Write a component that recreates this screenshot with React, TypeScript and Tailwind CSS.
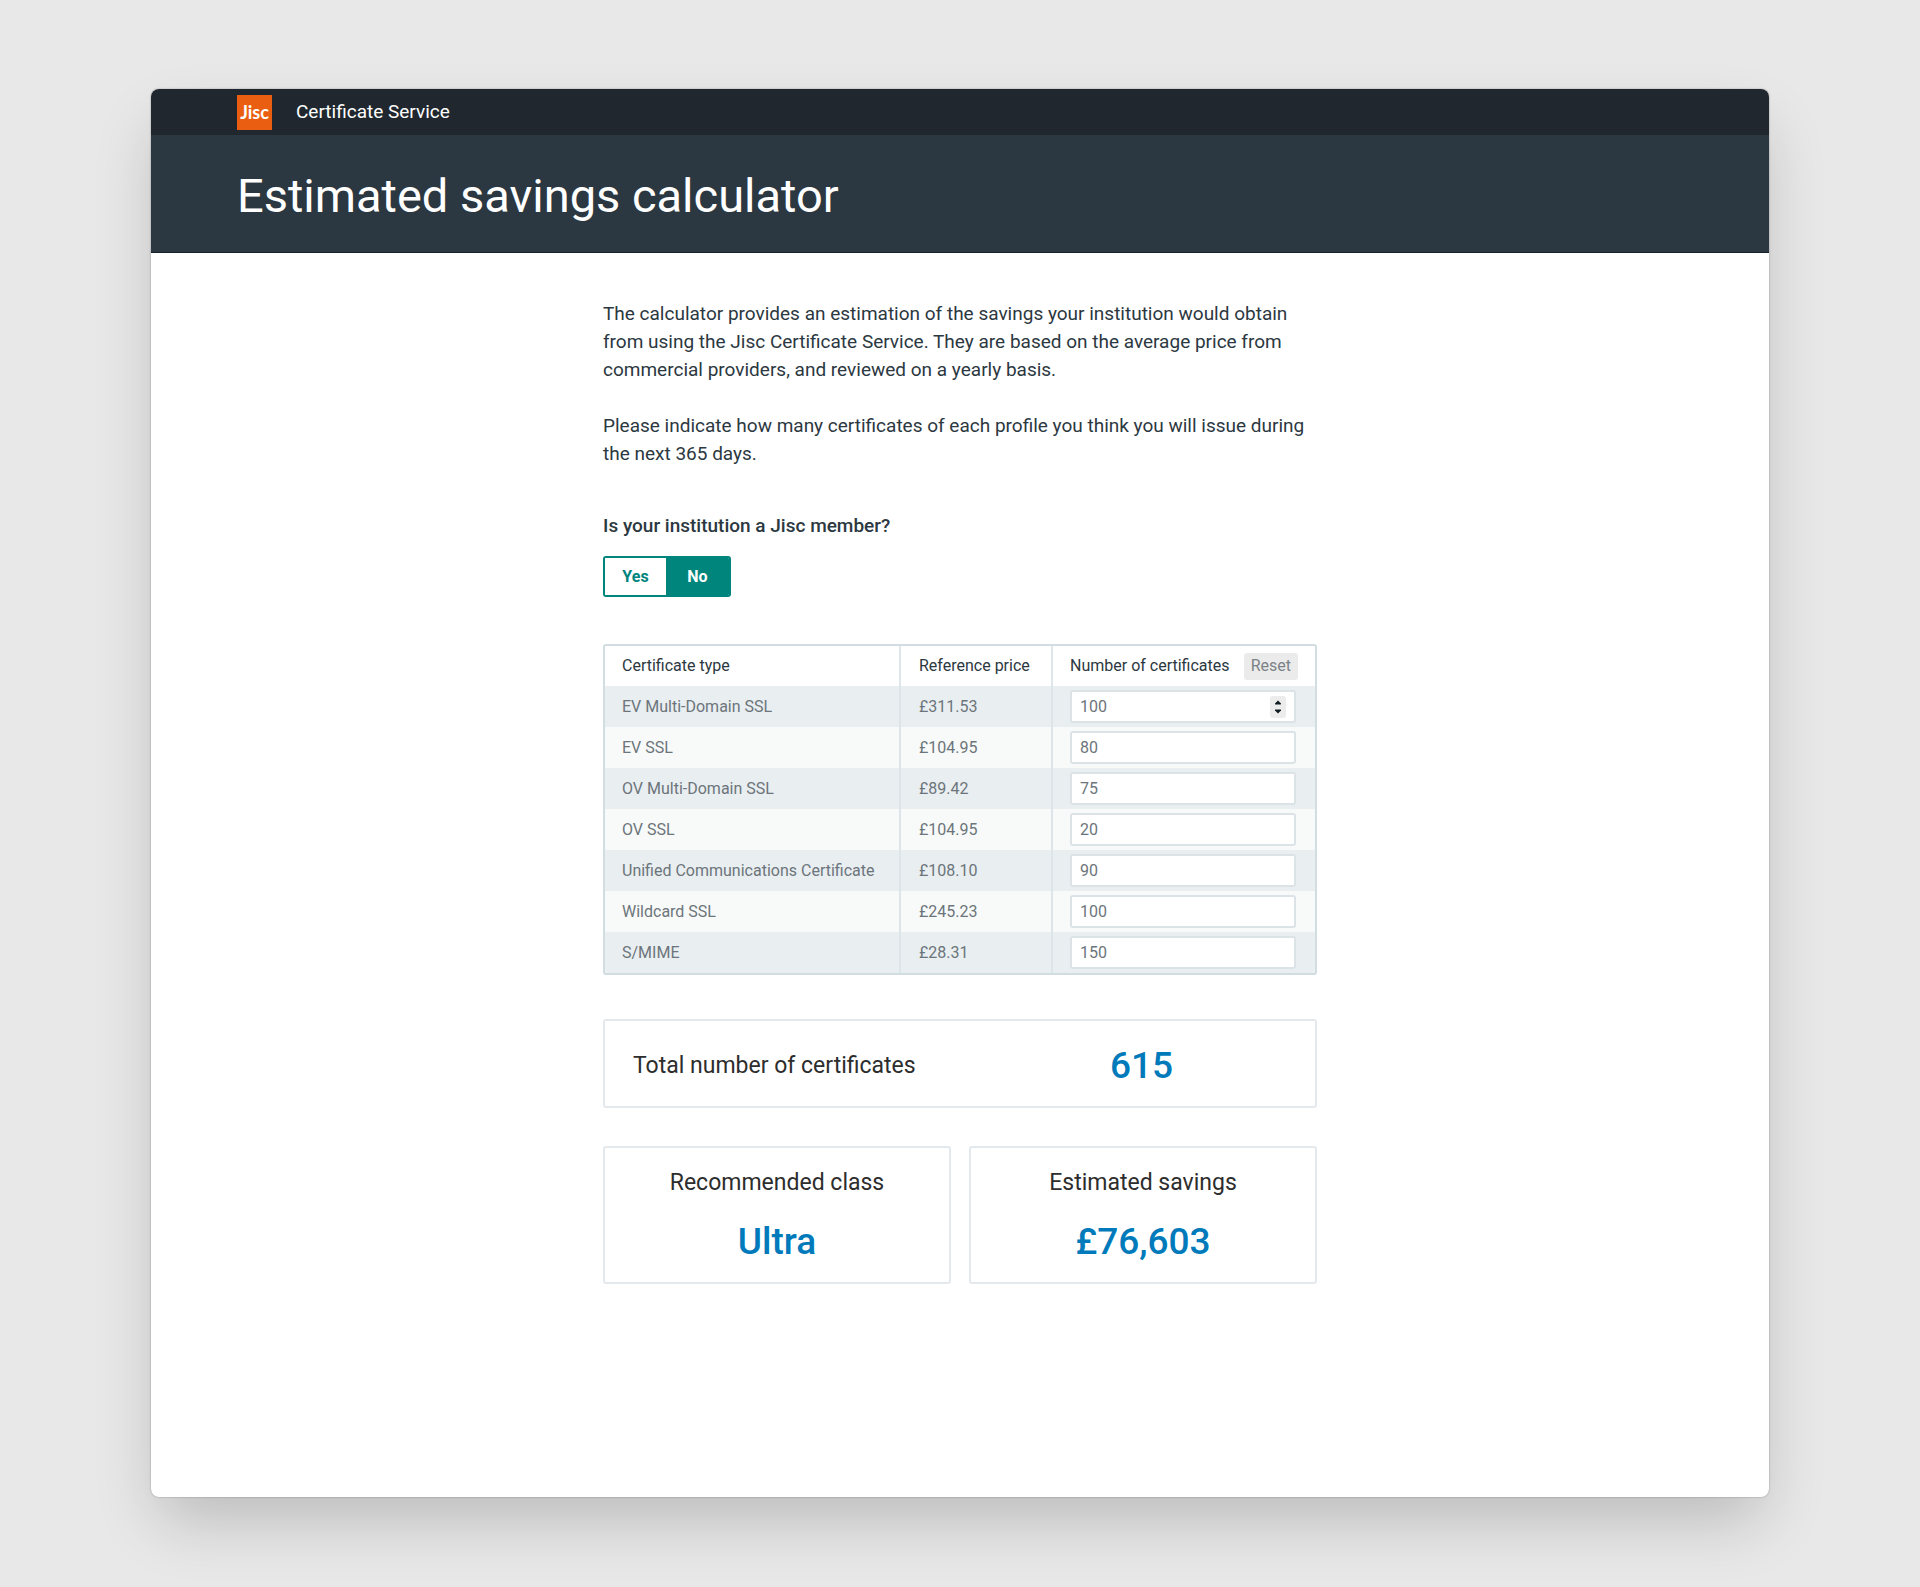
import React, { useState } from 'react';

interface Certificate {
  id: string;
  name: string;
  price: number;
}

const CERTIFICATES: Certificate[] = [
  { id: 'ev-multi', name: 'EV Multi-Domain SSL', price: 311.53 },
  { id: 'ev', name: 'EV SSL', price: 104.95 },
  { id: 'ov-multi', name: 'OV Multi-Domain SSL', price: 89.42 },
  { id: 'ov', name: 'OV SSL', price: 104.95 },
  { id: 'ucc', name: 'Unified Communications Certificate', price: 108.1 },
  { id: 'wildcard', name: 'Wildcard SSL', price: 245.23 },
  { id: 'smime', name: 'S/MIME', price: 28.31 },
];

const INITIAL_COUNTS = [100, 80, 75, 20, 90, 100, 150];

// Yearly subscription, taken off the commercial price
const ULTRA_FEE = 10250;

const JiscLogo: React.FC = () => (
  <span className="flex size-[35px] items-center justify-center bg-[#ea5e11] font-['Lato',sans-serif] text-lg leading-none font-bold text-white">
    Jisc
  </span>
);

interface StepperProps {
  label: string;
  onStep: (delta: number) => void;
}

const Stepper: React.FC<StepperProps> = ({ label, onStep }) => (
  <span className="flex h-[22px] w-4 flex-col items-center justify-center gap-1 rounded-[3px] bg-[#ececec]">
    <button type="button" aria-label={`Increase ${label}`} onClick={() => onStep(1)}>
      <svg width="8" height="5" viewBox="0 0 8 5" className="block fill-[#0f1d22]">
        <path d="M4 0.4 L7 3.6 Q7.3 4.5 6.4 4.5 H1.6 Q0.7 4.5 1 3.6 Z" />
      </svg>
    </button>
    <button type="button" aria-label={`Decrease ${label}`} onClick={() => onStep(-1)}>
      <svg width="8" height="5" viewBox="0 0 8 5" className="block fill-[#0f1d22]">
        <path d="M4 4.6 L7 1.4 Q7.3 0.5 6.4 0.5 H1.6 Q0.7 0.5 1 1.4 Z" />
      </svg>
    </button>
  </span>
);

interface ResultProps {
  label: string;
  value: string;
}

const ResultCard: React.FC<ResultProps> = ({ label, value }) => (
  <section className="flex h-[138px] flex-1 flex-col items-center rounded-[3px] border-2 border-[#e4e9ed] pt-[17px] text-center">
    <h2 className="text-[23px] leading-9 text-[#2d2d2d]">{label}</h2>
    <p className="mt-[17px] text-[37px] leading-[48px] font-medium text-[#007aba]">{value}</p>
  </section>
);

export default function App() {
  const [isMember, setIsMember] = useState(false);
  const [counts, setCounts] = useState(INITIAL_COUNTS);
  const [activeRow, setActiveRow] = useState(0);

  const updateCount = (index: number, value: number) => {
    setCounts(counts.map((count, i) => (i === index ? Math.max(0, value) : count)));
  };

  const total = counts.reduce((sum, count) => sum + count, 0);
  const commercial = counts.reduce((sum, count, i) => sum + count * CERTIFICATES[i].price, 0);
  const savings = Math.max(0, Math.round(commercial - ULTRA_FEE));

  return (
    <div className="min-h-screen bg-[#e8e8e8] px-[151px] pt-[89px] pb-[90px] font-['Roboto',sans-serif] text-[#2c3841]">
      <div className="overflow-hidden rounded-lg bg-white shadow-[0_0_2px_rgba(0,0,0,0.35),0_30px_60px_-8px_rgba(0,0,0,0.2)]">
        <nav className="flex h-[46px] items-center gap-6 bg-[#20272e] px-[86px]">
          <JiscLogo />
          <a href="#" className="text-[19px] leading-7 text-white">Certificate Service</a>
        </nav>
        <header className="flex h-[118px] items-center border-b border-[#17232b] bg-[#2c3841] px-[86px] pt-1">
          <h1 className="text-[47px] leading-[56px] text-white">Estimated savings calculator</h1>
        </header>

        <main className="mx-auto w-[714px] pt-[47px] pb-[213px]">
          <div className="space-y-7 text-[19px] leading-7">
            <p>
              The calculator provides an estimation of the savings your institution would obtain from using the Jisc
              Certificate Service. They are based on the average price from commercial providers, and reviewed on a
              yearly basis.
            </p>
            <p>
              Please indicate how many certificates of each profile you think you will issue during the next 365 days.
            </p>
          </div>

          <div className="mt-11">
            <p id="member-label" className="text-[19px] leading-7 font-medium">Is your institution a Jisc member?</p>
            <div
              role="group"
              aria-labelledby="member-label"
              className="mt-4 flex h-[41px] w-32 overflow-hidden rounded-[3px] border-2 border-[#00857d] text-base font-bold"
            >
              <button
                type="button"
                aria-pressed={isMember}
                onClick={() => setIsMember(true)}
                className={`w-[61px] ${isMember ? 'bg-[#00857d] text-white' : 'bg-white text-[#00857d]'}`}
              >
                Yes
              </button>
              <button
                type="button"
                aria-pressed={!isMember}
                onClick={() => setIsMember(false)}
                className={`flex-1 ${isMember ? 'bg-white text-[#00857d]' : 'bg-[#00857d] text-white'}`}
              >
                No
              </button>
            </div>
          </div>

          <div className="mt-[47px] overflow-hidden rounded-[3px] border-2 border-[#d2dde1]">
            <table className="w-full table-fixed border-collapse text-left text-base leading-6 whitespace-nowrap">
              <colgroup>
                <col className="w-[295px]" />
                <col className="w-[152px]" />
                <col />
              </colgroup>
              <thead>
                <tr className="h-10">
                  <th className="border-r-2 border-[#e0e7ea] px-[17px] font-normal">Certificate type</th>
                  <th className="border-r-2 border-[#e0e7ea] px-[18px] font-normal">Reference price</th>
                  <th className="px-[17px] font-normal">
                    <div className="flex items-center justify-between">
                      <span>Number of certificates</span>
                      <button
                        type="button"
                        onClick={() => setCounts(CERTIFICATES.map(() => 0))}
                        className="h-[27px] rounded-[3px] bg-[#ebebeb] px-[7px] text-[#7c8287]"
                      >
                        Reset
                      </button>
                    </div>
                  </th>
                </tr>
              </thead>
              <tbody className="text-[#6c757b]">
                {CERTIFICATES.map((cert, i) => (
                  <tr key={cert.id} className="h-[41px] odd:bg-[#e9eef1] even:bg-[#f8faf9]">
                    <td className="border-r-2 border-[#dde5e8] px-[17px]">
                      <label htmlFor={cert.id}>{cert.name}</label>
                    </td>
                    <td className="border-r-2 border-[#dde5e8] px-[18px]">£{cert.price.toFixed(2)}</td>
                    <td className="pr-[19px] pl-[17px]">
                      <div className="flex h-[33px] items-center rounded-[3px] border-2 border-[#dbe3e7] bg-white px-2">
                        <input
                          id={cert.id}
                          type="number"
                          min={0}
                          value={counts[i]}
                          onFocus={() => setActiveRow(i)}
                          onChange={(e) => updateCount(i, Number(e.target.value))}
                          className="w-full min-w-0 flex-1 [appearance:textfield] outline-none"
                        />
                        {activeRow === i && (
                          <Stepper label={cert.name} onStep={(delta) => updateCount(i, counts[i] + delta)} />
                        )}
                      </div>
                    </td>
                  </tr>
                ))}
              </tbody>
            </table>
          </div>

          <section className="mt-11 grid h-[89px] grid-cols-2 items-center rounded-[3px] border-2 border-[#e4e9ed] pt-1">
            <h2 className="pl-7 text-[23px] leading-9 text-[#2d2d2d]">Total number of certificates</h2>
            <p className="pl-2 text-center text-[37px] leading-[48px] font-medium text-[#007aba]">{total}</p>
          </section>

          <div className="mt-[38px] flex gap-[18px]">
            <ResultCard label="Recommended class" value="Ultra" />
            <ResultCard label="Estimated savings" value={`£${savings.toLocaleString('en-GB')}`} />
          </div>
        </main>
      </div>
    </div>
  );
}
